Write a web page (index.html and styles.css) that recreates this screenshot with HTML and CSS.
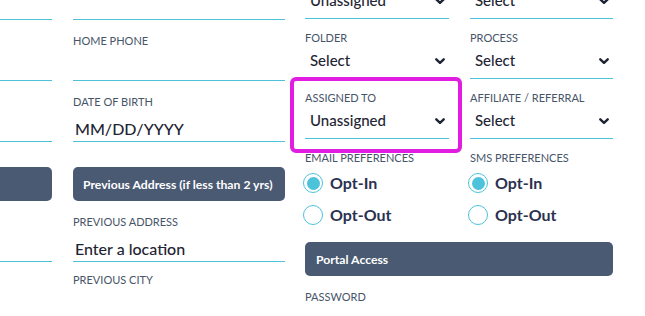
FILE: index.html
```html
<!DOCTYPE html>
<html lang="en">

<head>
  <meta charset="UTF-8" />
  <meta name="viewport" content="width=device-width, initial-scale=1.0" />
  <title>Edit Client</title>
  <link rel="stylesheet" href="styles.css">
</head>

<body>
  <main class="page">
    <!-- first column is scrolled out of view, only its lines show -->
    <div class="col">
      <input class="text-input" type="text" name="email" aria-label="Email" />

      <div class="field">
        <label for="cell"></label>
        <input class="text-input" type="text" name="cell" id="cell" aria-label="Cell Phone" />
      </div>

      <div class="field">
        <label for="ssn"></label>
        <input class="text-input" type="text" name="ssn" id="ssn" aria-label="SSN" />
      </div>

      <div class="section-bar" aria-label="Address"></div>

      <div class="field">
        <label for="address"></label>
        <input class="text-input" type="text" name="address" id="address" aria-label="Address" />
      </div>
    </div>

    <div class="col">
      <input class="text-input" type="text" name="phone" aria-label="Phone" />

      <div class="field">
        <label for="home-phone">Home Phone</label>
        <input class="text-input" type="text" name="home_phone" id="home-phone" />
      </div>

      <div class="field">
        <label for="dob">Date of Birth</label>
        <input class="text-input" type="text" name="dob" id="dob" placeholder="MM/DD/YYYY" />
      </div>

      <div class="section-bar">Previous Address (if less than 2 yrs)</div>

      <div class="field">
        <label for="prev-address">Previous Address</label>
        <input class="text-input" type="text" name="prev_address" id="prev-address" placeholder="Enter a location" />
      </div>

      <div class="field field-tight">
        <label for="prev-city">Previous City</label>
      </div>
    </div>

    <div class="side">
      <div class="pair">
        <div class="select-box">
          <span>Unassigned</span>
          <svg class="chevron" width="10" height="6" viewBox="0 0 10 6"><path d="M1.3 1.3 L5 4.8 L8.7 1.3" /></svg>
        </div>
        <div class="select-box">
          <span>Select</span>
          <svg class="chevron" width="10" height="6" viewBox="0 0 10 6"><path d="M1.3 1.3 L5 4.8 L8.7 1.3" /></svg>
        </div>
      </div>

      <div class="pair">
        <div class="field field-side">
          <label>Folder</label>
          <div class="select-box">
            <span>Select</span>
            <svg class="chevron" width="10" height="6" viewBox="0 0 10 6"><path d="M1.3 1.3 L5 4.8 L8.7 1.3" /></svg>
          </div>
        </div>
        <div class="field field-side">
          <label>Process</label>
          <div class="select-box">
            <span>Select</span>
            <svg class="chevron" width="10" height="6" viewBox="0 0 10 6"><path d="M1.3 1.3 L5 4.8 L8.7 1.3" /></svg>
          </div>
        </div>
      </div>

      <div class="pair">
        <div class="field field-side">
          <label>Assigned To</label>
          <div class="select-box">
            <span>Unassigned</span>
            <svg class="chevron" width="10" height="6" viewBox="0 0 10 6"><path d="M1.3 1.3 L5 4.8 L8.7 1.3" /></svg>
          </div>
          <div class="highlight-ring"></div>
        </div>
        <div class="field field-side">
          <label>Affiliate / Referral</label>
          <div class="select-box">
            <span>Select</span>
            <svg class="chevron" width="10" height="6" viewBox="0 0 10 6"><path d="M1.3 1.3 L5 4.8 L8.7 1.3" /></svg>
          </div>
        </div>
      </div>

      <div class="pair">
        <div class="field field-side">
          <label>Email Preferences</label>
          <div class="radio-group">
            <label class="radio"><input type="radio" name="email_pref" checked /> Opt-In</label>
            <label class="radio"><input type="radio" name="email_pref" /> Opt-Out</label>
          </div>
        </div>
        <div class="field field-side">
          <label>SMS Preferences</label>
          <div class="radio-group">
            <label class="radio"><input type="radio" name="sms_pref" checked /> Opt-In</label>
            <label class="radio"><input type="radio" name="sms_pref" /> Opt-Out</label>
          </div>
        </div>
      </div>

      <div class="section-bar section-bar-side">Portal Access</div>

      <div class="field">
        <label for="password">Password</label>
      </div>
    </div>
  </main>
</body>

</html>
```

FILE: styles.css
```css
body {
  margin: 0;
  background-color: #fff;
  color: #1e2433;
  font-family: Lato, "Open Sans", sans-serif;
  overflow: hidden;
}

.page {
  display: flex;
  gap: 21px;
  margin-left: -160px;
  margin-top: -15px;
}

.col {
  width: 212px;
  padding-top: 4px;
  flex-shrink: 0;
}

.side {
  width: 308px;
  margin-left: -1px;
  flex-shrink: 0;
}

.field {
  position: relative;
  margin-top: 14px;
}

.field-tight {
  margin-top: 11px;
}

.field-side {
  margin-top: 12px;
}

.field > label {
  display: block;
  min-height: 14px;
  font-size: 11px;
  line-height: 14px;
  text-transform: uppercase;
  color: #475569;
}

.text-input {
  display: block;
  box-sizing: border-box;
  width: 100%;
  height: 31px;
  margin: 2px 0 0;
  padding: 7px 2px 3px;
  border: none;
  border-bottom: 1px solid #4cc3db;
  border-radius: 0;
  font-family: inherit;
  font-size: 16px;
  font-weight: 500;
  line-height: 20px;
  color: #1e2433;
  outline: none;
}

.col > .text-input {
  margin-top: 0;
}

.text-input::placeholder {
  color: #1e2433;
  opacity: 1;
}

.section-bar {
  margin-top: 25px;
  height: 34px;
  padding: 0 10px;
  display: flex;
  align-items: center;
  background-color: #4a5a73;
  border-radius: 5px;
  color: #fff;
  font-size: 12.2px;
  font-weight: 700;
  white-space: nowrap;
}

.section-bar-side {
  margin-top: 11px;
  padding: 0 11px;
}

.pair {
  display: grid;
  grid-template-columns: 144px 143px;
  column-gap: 21px;
}

.select-box {
  box-sizing: border-box;
  height: 34px;
  padding: 5px 4px 0 5px;
  display: flex;
  justify-content: space-between;
  align-items: flex-start;
  border-bottom: 1px solid #4cc3db;
  font-size: 15px;
  font-weight: 500;
  line-height: 20px;
  color: #1e2433;
}

.chevron {
  margin-top: 8px;
  fill: none;
  stroke: #1e2433;
  stroke-width: 2.4;
  stroke-linecap: round;
  stroke-linejoin: round;
}

.highlight-ring {
  position: absolute;
  top: -14px;
  left: -15px;
  right: -13px;
  bottom: -14px;
  border: 4px solid #e01de0;
  border-radius: 6px;
  pointer-events: none;
}

.radio-group {
  padding-top: 2px;
}

.radio {
  height: 32px;
  display: flex;
  align-items: center;
  gap: 7px;
  font-size: 16px;
  font-weight: 700;
  line-height: 20px;
  color: #2b3150;
}

.radio input {
  appearance: none;
  -webkit-appearance: none;
  box-sizing: border-box;
  width: 20px;
  height: 20px;
  margin: 0 0 0 -2px;
  border: 1.5px solid #4cc3db;
  border-radius: 50%;
  display: grid;
  place-content: center;
}

.radio input:checked::after {
  content: "";
  width: 13px;
  height: 13px;
  border-radius: 50%;
  background-color: #4cc3db;
}
```
